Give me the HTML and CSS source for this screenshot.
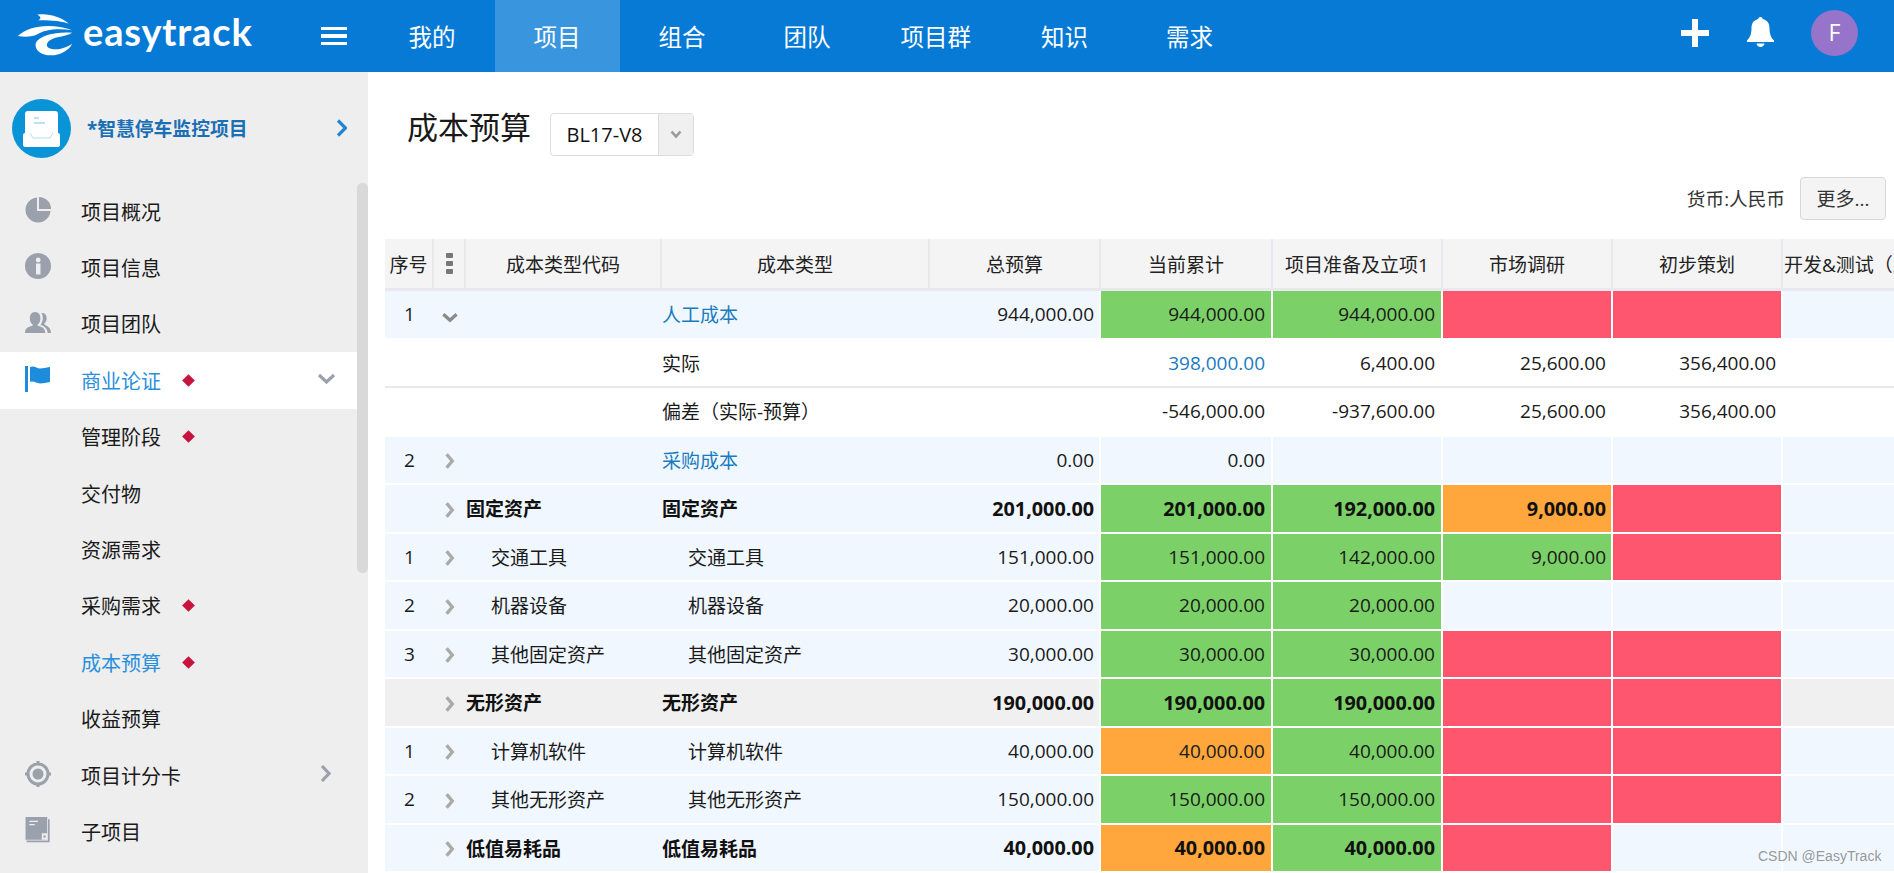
FILE: index.html
```html
<!DOCTYPE html>
<html lang="zh-CN">
<head>
<meta charset="utf-8">
<title>成本预算</title>
<link rel="stylesheet" href="styles.css">
</head>
<body>
<header class="topbar">
  <div class="logo">
    <svg class="logo-mark" viewBox="50 30 170 135"><path d="M110 38C140 32 185 45 205 65C175 55 140 55 112 55C125 50 120 42 110 38Z"/><path d="M52 102C85 72 150 62 215 85C175 78 130 82 105 100C90 105 70 105 52 102Z"/><path d="M215 92C170 88 120 98 106 122C100 145 125 160 150 160C180 160 205 145 215 125C195 138 165 148 145 138C130 128 145 110 175 105C190 102 205 98 215 92Z"/></svg>
    <span class="logo-text">easytrack</span>
  </div>
  <div class="burger"><i></i><i></i><i></i></div>
  <nav class="nav">
    <a class="nav-item">我的</a>
    <a class="nav-item on">项目</a>
    <a class="nav-item">组合</a>
    <a class="nav-item">团队</a>
    <a class="nav-item">项目群</a>
    <a class="nav-item">知识</a>
    <a class="nav-item">需求</a>
  </nav>
  <div class="top-right">
    <svg class="plus" viewBox="0 0 28 28"><path d="M11 0h6v11h11v6H17v11h-6V17H0v-6h11z"/></svg>
    <svg class="bell" viewBox="0 0 27 30"><path d="M13.500 0c1.300 0 2.200.9 2.200 2.100C20 3 22.500 6.500 22.500 11c0 6 1.500 9.500 4.500 12.500V25H0v-1.500C3 20.500 4.500 17 4.500 11c0-4.500 2.500-8 6.800-8.900C11.300.9 12.200 0 13.500 0z"/><path d="M9.500 26.500h8c-.3 2-2 3.500-4 3.500s-3.700-1.500-4-3.500z"/></svg>
    <div class="avatar">F</div>
  </div>
</header>
<div class="body">
  <aside class="side">
    <div class="project">
      <svg class="project-icon" viewBox="0 0 59 59"><circle cx="29.500" cy="29.500" r="29.500" fill="#0a94d8"/><rect x="13" y="12" width="33" height="28" rx="3" fill="#fff"/><path d="M22 19h5M22 24h11" stroke="#a6d8f2" stroke-width="1.500"/><path d="M11 36a2 2 0 0 1 2-2h5l3 5h17l3-5h5a2 2 0 0 1 2 2v10a2 2 0 0 1-2 2H13a2 2 0 0 1-2-2z" fill="#fff"/><path d="M18 34l3 5h17l3-5" fill="none" stroke="#b5def5" stroke-width="1"/></svg>
      <span class="project-name">*智慧停车监控项目</span>
      <svg class="project-arrow" viewBox="0 0 11 18"><path d="M2 1.500L9.500 9 2 16.500" fill="none" stroke="#1f86d6" stroke-width="3.200"/></svg>
    </div>
    <ul class="menu">
      <li class="mi"><svg class="mi-icon" viewBox="0 0 26 26"><path d="M12 .5A12.500 12.500 0 1 0 25.500 14H12z"/><path d="M14 0A12 12 0 0 1 26 12H14z"/></svg><span>项目概况</span></li>
      <li class="mi"><svg class="mi-icon" viewBox="0 0 26 26"><circle cx="13" cy="13" r="13"/><rect x="11" y="10.500" width="4.500" height="11" fill="#eee"/><circle cx="13.200" cy="7" r="2.400" fill="#eee"/></svg><span>项目信息</span></li>
      <li class="mi"><svg class="mi-icon" viewBox="0 0 27 23"><path d="M0 22c0-4 2-6 6-7 1.500-.4 2-1 2-2-2-1-3-3.500-3-6.500C5 3 7 0 10.500 0S16 3 16 6.500c0 3-1 5.500-3 6.500 0 1 .5 1.600 2 2 4 1 6 3 6 7z"/><path d="M18 1c3 0 4.500 2.500 4.500 5.500 0 2.500-1 4.500-2.500 5.500 0 1 .5 1.400 1.500 1.800C25 15 27 18 27 22h-3.500c0-4-2.500-7-7.500-8.500 1.500-2 2.500-4.500 2.500-7 0-2-.5-4-1.500-5.300.3-.1.700-.2 1-.2z"/></svg><span>项目团队</span></li>
      <li class="mi active"><svg class="mi-icon" viewBox="0 0 26 26"><rect x="0" y="0" width="3" height="26" fill="#1e8cdc"/><path d="M5 1c4-2 7 1.500 10 1.500S21 1.500 25 1v15c-4 .5-6 1.500-10 1.500S9 14.500 5 16z" fill="#1e8cdc"/></svg><span>商业论证</span><i class="dot"></i><svg class="caret-down" viewBox="0 0 19 11"><path d="M2 2l7.500 7L17 2" fill="none" stroke="#9aa0ac" stroke-width="3.200"/></svg></li>
      <li class="mi"><span>管理阶段</span><i class="dot"></i></li>
      <li class="mi"><span>交付物</span></li>
      <li class="mi"><span>资源需求</span></li>
      <li class="mi"><span>采购需求</span><i class="dot"></i></li>
      <li class="mi sel"><span>成本预算</span><i class="dot"></i></li>
      <li class="mi"><span>收益预算</span></li>
      <li class="mi"><svg class="mi-icon" viewBox="0 0 26 26"><circle cx="13" cy="13" r="10" fill="none" stroke="#9aa0ac" stroke-width="3"/><circle cx="13" cy="13" r="5.500"/><path d="M11.500 0h3v3h-3zM11.500 23h3v3h-3zM0 11.500h3v3H0zM23 11.500h3v3h-3z"/></svg><span>项目计分卡</span><svg class="caret-right" viewBox="0 0 12 19"><path d="M2 2l7 7.500L2 17" fill="none" stroke="#9aa0ac" stroke-width="3.200"/></svg></li>
      <li class="mi"><svg class="mi-icon" viewBox="0 0 23 24"><rect width="20" height="21"/><path d="M21.500 2v20.500H1" fill="none" stroke="#9aa0ac" stroke-width="1.500"/><path d="M3.500 4h8M3.500 7h5" stroke="#eee" stroke-width="1.300"/><path d="M15 15h5v6h-5z" fill="#eee"/><path d="M16.500 17h2v2h-2z"/></svg><span>子项目</span></li>
      <li class="mi"><svg class="mi-icon" viewBox="0 0 23 24"><rect width="20" height="21"/></svg></li>
    </ul>
    <div class="thumb"></div>
  </aside>
  <main class="main">
    <div class="title-row">
      <h1 class="title">成本预算</h1>
      <div class="select">
        <span class="select-val">BL17-V8</span>
        <span class="select-btn"><svg viewBox="0 0 12 9"><path d="M1.500 1.500L6 6.500l4.500-5" fill="none" stroke="#9a9a9a" stroke-width="2.600"/></svg></span>
      </div>
    </div>
    <div class="tools">
      <span class="currency">货币:人民币</span>
      <button class="more">更多...</button>
    </div>
    <div class="table">
      <div class="row head">
        <div class="th">序号</div>
        <div class="th"><span class="dots"><i></i><i></i><i></i></span></div>
        <div class="th">成本类型代码</div>
        <div class="th">成本类型</div>
        <div class="th">总预算</div>
        <div class="th">当前累计</div>
        <div class="th">项目准备及立项1</div>
        <div class="th">市场调研</div>
        <div class="th">初步策划</div>
        <div class="th left">开发&amp;测试（上线）</div>
      </div>

      <div class="row">
        <div class="td seq">1</div><div class="td ico"><svg class="tw-down" viewBox="0 0 16 10"><path d="M2 2l6 5.500L14 2" fill="none" stroke="#8a8a8a" stroke-width="3"/></svg></div><div class="td"></div><div class="td"><a class="link">人工成本</a></div>
        <div class="td num tot">944,000.00</div><div class="td num g">944,000.00</div><div class="td num g">944,000.00</div><div class="td p"></div><div class="td p"></div><div class="td"></div>
      </div>
      <div class="row plain line">
        <div class="td"></div><div class="td"></div><div class="td"></div><div class="td">实际</div>
        <div class="td num tot"></div><div class="td num"><a class="link">398,000.00</a></div><div class="td num">6,400.00</div><div class="td num">25,600.00</div><div class="td num">356,400.00</div><div class="td"></div>
      </div>
      <div class="row plain">
        <div class="td"></div><div class="td"></div><div class="td"></div><div class="td">偏差（实际-预算）</div>
        <div class="td num tot"></div><div class="td num">-546,000.00</div><div class="td num">-937,600.00</div><div class="td num">25,600.00</div><div class="td num">356,400.00</div><div class="td"></div>
      </div>
      <div class="row">
        <div class="td seq">2</div><div class="td ico"><svg class="tw" viewBox="0 0 10 16"><path d="M2 2l5 6-5 6" fill="none" stroke="#aaa" stroke-width="3"/></svg></div><div class="td"></div><div class="td"><a class="link">采购成本</a></div>
        <div class="td num tot">0.00</div><div class="td num">0.00</div><div class="td"></div><div class="td"></div><div class="td"></div><div class="td"></div>
      </div>
      <div class="row bold">
        <div class="td seq"></div><div class="td ico"><svg class="tw" viewBox="0 0 10 16"><path d="M2 2l5 6-5 6" fill="none" stroke="#aaa" stroke-width="3"/></svg></div><div class="td">固定资产</div><div class="td">固定资产</div>
        <div class="td num tot">201,000.00</div><div class="td num g">201,000.00</div><div class="td num g">192,000.00</div><div class="td num o">9,000.00</div><div class="td p"></div><div class="td"></div>
      </div>
      <div class="row">
        <div class="td seq">1</div><div class="td ico"><svg class="tw" viewBox="0 0 10 16"><path d="M2 2l5 6-5 6" fill="none" stroke="#aaa" stroke-width="3"/></svg></div><div class="td in-code">交通工具</div><div class="td in-type">交通工具</div>
        <div class="td num tot">151,000.00</div><div class="td num g">151,000.00</div><div class="td num g">142,000.00</div><div class="td num g">9,000.00</div><div class="td p"></div><div class="td"></div>
      </div>
      <div class="row">
        <div class="td seq">2</div><div class="td ico"><svg class="tw" viewBox="0 0 10 16"><path d="M2 2l5 6-5 6" fill="none" stroke="#aaa" stroke-width="3"/></svg></div><div class="td in-code">机器设备</div><div class="td in-type">机器设备</div>
        <div class="td num tot">20,000.00</div><div class="td num g">20,000.00</div><div class="td num g">20,000.00</div><div class="td"></div><div class="td"></div><div class="td"></div>
      </div>
      <div class="row">
        <div class="td seq">3</div><div class="td ico"><svg class="tw" viewBox="0 0 10 16"><path d="M2 2l5 6-5 6" fill="none" stroke="#aaa" stroke-width="3"/></svg></div><div class="td in-code">其他固定资产</div><div class="td in-type">其他固定资产</div>
        <div class="td num tot">30,000.00</div><div class="td num g">30,000.00</div><div class="td num g">30,000.00</div><div class="td p"></div><div class="td p"></div><div class="td"></div>
      </div>
      <div class="row bold grey">
        <div class="td seq"></div><div class="td ico"><svg class="tw" viewBox="0 0 10 16"><path d="M2 2l5 6-5 6" fill="none" stroke="#aaa" stroke-width="3"/></svg></div><div class="td">无形资产</div><div class="td">无形资产</div>
        <div class="td num tot">190,000.00</div><div class="td num g">190,000.00</div><div class="td num g">190,000.00</div><div class="td p"></div><div class="td p"></div><div class="td"></div>
      </div>
      <div class="row">
        <div class="td seq">1</div><div class="td ico"><svg class="tw" viewBox="0 0 10 16"><path d="M2 2l5 6-5 6" fill="none" stroke="#aaa" stroke-width="3"/></svg></div><div class="td in-code">计算机软件</div><div class="td in-type">计算机软件</div>
        <div class="td num tot">40,000.00</div><div class="td num o">40,000.00</div><div class="td num g">40,000.00</div><div class="td p"></div><div class="td p"></div><div class="td"></div>
      </div>
      <div class="row">
        <div class="td seq">2</div><div class="td ico"><svg class="tw" viewBox="0 0 10 16"><path d="M2 2l5 6-5 6" fill="none" stroke="#aaa" stroke-width="3"/></svg></div><div class="td in-code">其他无形资产</div><div class="td in-type">其他无形资产</div>
        <div class="td num tot">150,000.00</div><div class="td num g">150,000.00</div><div class="td num g">150,000.00</div><div class="td p"></div><div class="td p"></div><div class="td"></div>
      </div>
      <div class="row bold">
        <div class="td seq"></div><div class="td ico"><svg class="tw" viewBox="0 0 10 16"><path d="M2 2l5 6-5 6" fill="none" stroke="#aaa" stroke-width="3"/></svg></div><div class="td">低值易耗品</div><div class="td">低值易耗品</div>
        <div class="td num tot">40,000.00</div><div class="td num o">40,000.00</div><div class="td num g">40,000.00</div><div class="td p"></div><div class="td"></div><div class="td"></div>
      </div>
      <div class="row">
        <div class="td"></div><div class="td"></div><div class="td"></div><div class="td"></div>
        <div class="td"></div><div class="td o"></div><div class="td g"></div><div class="td p"></div><div class="td"></div><div class="td"></div>
      </div>
    </div>
  </main>
</div>
<div class="watermark">CSDN @EasyTrack</div>
</body>
</html>
```
FILE: styles.css
```css
* { box-sizing: border-box; }
html, body { margin: 0; height: 873px; overflow: hidden; background: #fff; }
body { font-family: "Open Sans", "Noto Sans CJK SC", sans-serif; color: #1a1a1a; font-size: 19px; position: relative; }
ul { list-style: none; margin: 0; padding: 0; }

.topbar { height: 72px; background: #077ad6; display: flex; align-items: stretch; color: #fff; }
.logo { width: 321px; display: flex; align-items: flex-start; padding: 12px 0 0 17px; flex: none; }
.logo-mark { width: 57px; height: 45px; fill: #fff; flex: none; }
.logo-text { font-family: "Lato", sans-serif; font-size: 38px; line-height: 36px; margin: 1px 0 0 9px; font-weight: 700; letter-spacing: .85px; }
.burger { width: 48.500px; flex: none; display: flex; flex-direction: column; justify-content: center; gap: 4px; }
.burger i { display: block; width: 26px; height: 3.500px; background: #fff; }
.nav { display: flex; flex: 1; }
.nav-item { min-width: 125px; padding: 0 31px; display: flex; align-items: center; justify-content: center; font-size: 23.500px; color: #fff; }
.nav-item.on { background: #3a95df; }
.top-right { width: 214px; flex: none; position: relative; display: flex; align-items: flex-start; padding: 19px 0 0 1px; }
.plus { width: 28px; height: 28px; fill: #fff; flex: none; }
.bell { width: 27px; height: 30px; fill: #fff; flex: none; margin: -2px 0 0 38px; }
.avatar { width: 47px; height: 46px; border-radius: 50%; background: #9674ca; margin: -9px 0 0 37px; display: flex; align-items: center; justify-content: center; font-size: 23px; flex: none; padding-bottom: 2px; }

.body { display: flex; height: 801px; }
.side { width: 368px; flex: none; background: #eee; position: relative; overflow: hidden; }
.project { height: 111px; display: flex; align-items: flex-start; padding: 27px 0 0 12px; }
.project-icon { width: 59px; height: 59px; flex: none; }
.project-name { font-weight: 700; font-size: 18.800px; color: #1b6fb5; margin: 16px 0 0 16px; width: 249px; line-height: 28px; white-space: nowrap; }
.project-arrow { width: 11px; height: 18px; margin-top: 20px; flex: none; }
.mi { height: 56.400px; width: 357px; display: flex; align-items: center; padding-left: 81px; position: relative; font-size: 20px; color: #1a1a1a; }
.mi.active { background: #fff; color: #2a8fdc; }
.mi.sel { color: #2a8fdc; }
.mi-icon { position: absolute; left: 25px; top: 14px; width: 26px; height: 26px; fill: #9aa0ac; }
.dot { width: 9px; height: 9px; background: #c8143c; transform: rotate(45deg); margin-left: 23px; flex: none; }
.caret-down { position: absolute; left: 317px; top: 21px; width: 19px; height: 11px; }
.caret-right { position: absolute; left: 320px; top: 17px; width: 12px; height: 19px; }
.thumb { position: absolute; left: 357px; top: 111px; width: 11px; height: 390px; background: #d9d9d9; border-radius: 5px; }

.main { flex: 1; overflow: hidden; padding-left: 17px; min-width: 0; }
.title-row { display: flex; align-items: center; height: 43px; margin-top: 41px; padding-left: 22px; }
.title { font-weight: 400; font-size: 31px; margin: 0 19px 14px 0; line-height: 43px; color: #1a1a1a; }
.select { width: 144px; height: 43px; border: 1px solid #dcdcdc; border-radius: 4px; display: flex; background: #fff; }
.select-val { width: 107px; display: flex; align-items: center; justify-content: center; font-size: 20px; color: #111; }
.select-btn { flex: 1; background: #f0f0f0; border-left: 1px solid #dcdcdc; display: flex; align-items: center; justify-content: center; }
.select-btn svg { width: 12px; height: 9px; }
.tools { display: flex; justify-content: flex-end; align-items: center; height: 43px; margin: 21px 8px 19px 0; gap: 15px; }
.currency { color: #333; margin-bottom: 2px; font-size: 18.670px; }
.more { width: 86px; height: 43px; background: #f4f4f4; border: 1px solid #d8d8d8; border-radius: 4px; font: inherit; color: #333; padding: 0 0 2px; }

.table { width: 1569px; }
.row { display: grid; grid-template-columns: 49px 32px 196px 268px 171px 172px 170px 170px 170px 171px; height: 48.5px; background: #f0f7fe; color: #1a1a1a; }
.row.head { height: 52px; background: #f4f4f4; border-bottom: 3px solid #e8e8ee; color: #222; }
.row.plain { background: #fff; }
.row.grey { background: #f0f0f0; }
.row.bold { font-weight: 700; color: #111; }
.row.bold .num { font-size: 19.800px; }
.row.line { border-bottom: 2px solid #e8e8ee; }
.th { display: flex; align-items: center; justify-content: center; border-right: 2px solid #e8e8ee; white-space: nowrap; overflow: hidden; }
.th.left { justify-content: flex-start; padding-left: 1px; border: 0; }
.td { display: flex; align-items: center; min-width: 0; white-space: nowrap; border-right: 2px solid #fff; border-bottom: 2px solid #fff; }
.td:nth-child(-n+4) { border-right: 0; }
.row.line .td { border-bottom: 0; }
.seq { justify-content: center; }
.ico { justify-content: center; }
.num { justify-content: flex-end; padding-right: 6px; }
.tot, .td.num:nth-child(8), .td.num:nth-child(9) { padding-right: 5px; }
.in-code { padding-left: 25px; }
.in-type { padding-left: 26px; }
.g { background: #7bd167; }
.o { background: #ffa63c; }
.p { background: #ff566f; }
.link { color: #1a7bbf; }
.dots { display: flex; flex-direction: column; gap: 2.500px; }
.dots i { display: block; width: 7px; height: 5.500px; background: #777; border-radius: 1px; }
.tw { width: 12px; height: 18px; margin-top: 3px; }
.tw-down { width: 18px; height: 11px; margin-top: 6px; }
.watermark { position: absolute; left: 1758px; top: 848px; font-family: "Liberation Sans", sans-serif; font-size: 14px; color: rgba(90, 90, 90, .62); white-space: nowrap; }
```
